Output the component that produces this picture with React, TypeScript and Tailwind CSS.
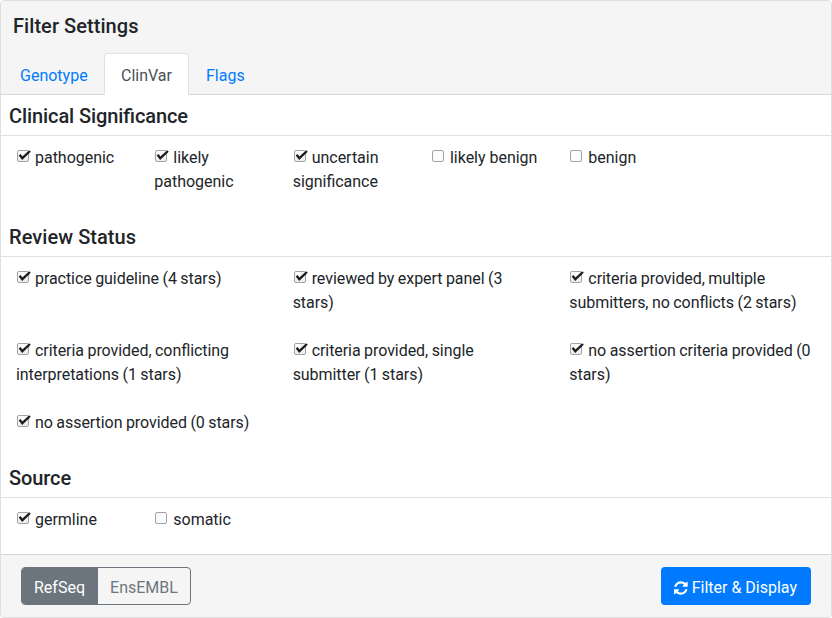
import React from "react";

function Box({ checked }: { checked?: boolean }) {
  return (
    <svg
      role="checkbox"
      aria-checked={!!checked}
      className="mr-1 inline-block h-[14px] w-[15px] align-[0px]"
      viewBox="0 0 15 14"
    >
      <defs>
        <linearGradient id="boxFill" x1="0" y1="0" x2="0" y2="1">
          <stop offset="0" stopColor="#ffffff" />
          <stop offset="1" stopColor="#ebebeb" />
        </linearGradient>
      </defs>
      <rect
        x="1.5"
        y="1.5"
        width="11"
        height="11"
        rx="1.5"
        fill={checked ? "url(#boxFill)" : "#fbfbfb"}
        stroke="#a3a3a3"
      />
      {checked && (
        <path d="M3.6 5.8 L6.3 9.2 L14 2" fill="none" stroke="#1c1c1c" strokeWidth="2.3" />
      )}
    </svg>
  );
}

type Item = [string, boolean];

function Section({
  title,
  items,
  wide,
  tracking,
}: {
  title: string;
  items: Item[];
  wide?: boolean;
  tracking: string;
}) {
  return (
    <section>
      <h5
        className={`mb-[10px] border-b border-[#dfdfdf] px-2 pt-[7px] pb-[7px] text-xl leading-6 font-medium ${tracking}`}
      >
        {title}
      </h5>
      <div
        className={
          wide
            ? "grid grid-cols-3 tracking-[-0.06px] [word-spacing:-0.4px]"
            : "grid grid-cols-6 tracking-[-0.02px]"
        }
      >
        {items.map(([label, checked]) => (
          <label key={label} className="mb-6 block px-[15px]">
            <Box checked={checked} />
            {label}
          </label>
        ))}
      </div>
    </section>
  );
}

export default function App() {
  return (
    <div className="flex h-[618px] w-[832px] flex-col overflow-hidden rounded border border-[#dfdfdf] bg-white font-[Roboto,sans-serif] text-base leading-6 text-[#212529] [font-feature-settings:'liga'_1]">
      <header className="h-[94px] shrink-0 border-b border-[#d6d6d6] bg-[#f5f5f5]">
        <h5 className="px-3 pt-[13px] text-xl leading-6 font-medium tracking-[0.06px]">Filter Settings</h5>
        <nav className="mt-[15px] flex pl-[2px]">
          <a className="w-[101px] border border-transparent px-4 pt-[10px] text-[#007bff]">Genotype</a>
          <a className="h-[42px] w-[85px] rounded-t border border-b-0 border-[#dee2e6] bg-white px-4 pt-[10px] text-[#495057]">
            ClinVar
          </a>
          <a className="border border-transparent px-4 pt-[10px] text-[#007bff]">Flags</a>
        </nav>
      </header>
      <main className="min-h-0 flex-1 pt-[2px]">
        <Section
          title="Clinical Significance"
          tracking="tracking-[-0.09px]"
          items={[
            ["pathogenic", true],
            ["likely pathogenic", true],
            ["uncertain significance", true],
            ["likely benign", false],
            ["benign", false],
          ]}
        />
        <Section
          wide
          title="Review Status"
          tracking="tracking-[0.06px]"
          items={[
            ["practice guideline (4 stars)", true],
            ["reviewed by expert panel (3 stars)", true],
            ["criteria provided, multiple submitters, no conflicts (2 stars)", true],
            ["criteria provided, conflicting interpretations (1 stars)", true],
            ["criteria provided, single submitter (1 stars)", true],
            ["no assertion criteria provided (0 stars)", true],
            ["no assertion provided (0 stars)", true],
          ]}
        />
        <Section
          title="Source"
          tracking="tracking-[-0.1px]"
          items={[
            ["germline", true],
            ["somatic", false],
          ]}
        />
      </main>
      <footer className="z-10 flex h-[63px] shrink-0 items-start justify-between border-t border-[#d6d6d6] bg-[#f5f5f5] px-5 pt-3">
        <div className="flex h-[38px] w-[170px] overflow-hidden rounded border border-[#6c757d]">
          <button className="w-[76px] bg-[#6c757d] pt-1 pr-px text-white">RefSeq</button>
          <button className="flex-1 pt-1 text-[#6c757d]">EnsEMBL</button>
        </div>
        <button className="flex h-[38px] w-[150px] items-center rounded bg-[#007bff] pt-[3px] pl-[13px] whitespace-nowrap text-white">
          <svg className="mr-1 h-4 w-[13.7px] shrink-0" viewBox="0 0 1536 1792" fill="currentColor">
            <path d="M1511 1056q0 5-1 7-64 268-268 434.5t-478 166.5q-146 0-282.5-55t-243.5-157l-129 129q-19 19-45 19t-45-19-19-45v-448q0-26 19-45t45-19h448q26 0 45 19t19 45-19 45l-137 137q71 66 161 102t187 36q134 0 250-65t186-179q11-17 53-117 8-23 30-23h192q13 0 22.5 9.5t9.5 22.5zm25-800v448q0 26-19 45t-45 19h-448q-26 0-45-19t-19-45 19-45l138-138q-148-137-349-137-134 0-250 65t-186 179q-11 17-53 117-8 23-30 23h-199q-13 0-22.5-9.5t-9.5-22.5v-7q65-268 270-434.5t480-166.5q146 0 284 55.5t245 156.5l130-129q19-19 45-19t45 19 19 45z" />
          </svg>
          Filter &amp; Display
        </button>
      </footer>
    </div>
  );
}
